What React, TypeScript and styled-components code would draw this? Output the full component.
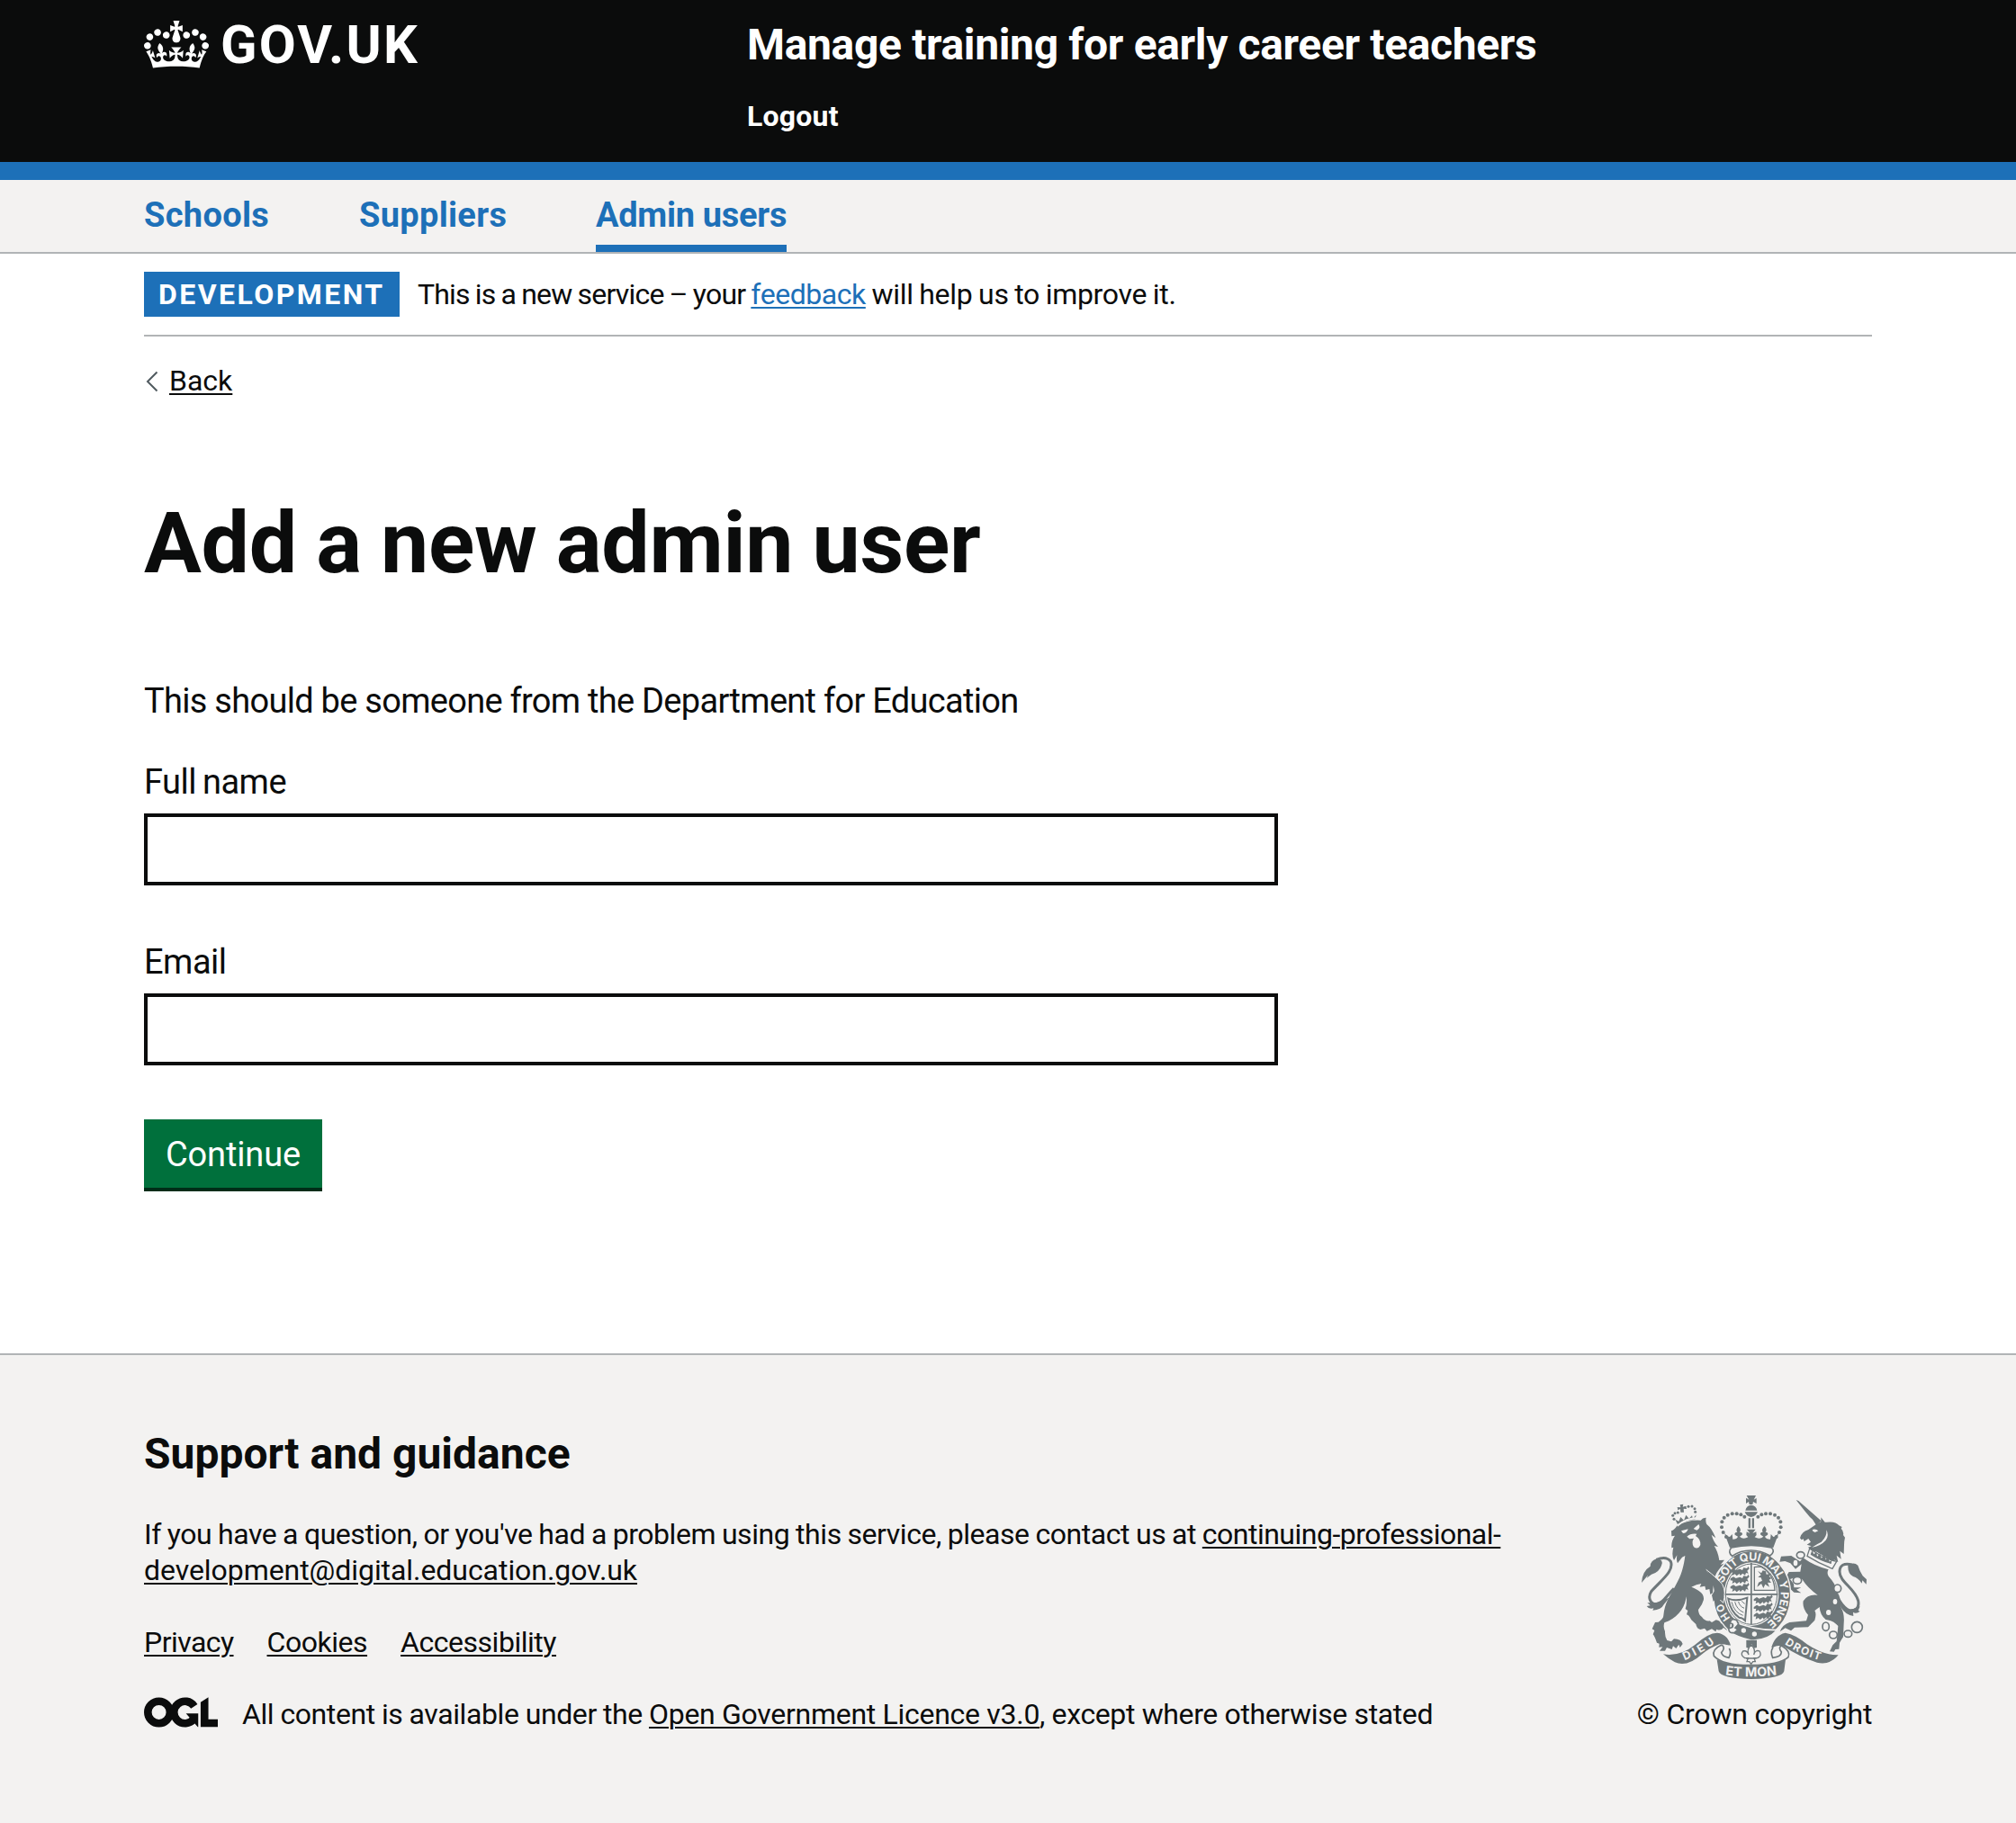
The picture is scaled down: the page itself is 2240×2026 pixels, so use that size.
import React from "react";
import styled, { createGlobalStyle } from "styled-components";

const ink = "#0b0c0c";
const blue = "#1d70b8";
const rule = "#b1b4b6";
const pale = "#f3f2f1";
const crestGrey = "#6e777a";

const GlobalStyle = createGlobalStyle`
  *, *::before, *::after { box-sizing: border-box; }
  body {
    margin: 0;
    background: #fff;
    color: ${ink};
    font-family: Roboto, "Liberation Sans", sans-serif;
    font-size: 32px;
    line-height: 40px;
  }
`;

const Page = styled.div`
  display: flex;
  flex-direction: column;
  min-height: 2026px;
`;

const Container = styled.div`
  width: 1920px;
  margin: 0 auto;
`;

/* One run of copy with its own tracking. */
const Run = styled.span<{ $track?: number; $word?: number }>`
  letter-spacing: ${(p) => p.$track ?? 0}px;
  word-spacing: ${(p) => p.$word ?? 0}px;
`;

const Link = styled.a<{ $track?: number; $word?: number; $tone?: string }>`
  color: ${(p) => p.$tone ?? ink};
  letter-spacing: ${(p) => p.$track ?? 0}px;
  word-spacing: ${(p) => p.$word ?? 0}px;
  text-decoration: underline;
  text-decoration-thickness: 2px;
  text-underline-offset: 3px;
`;

/* Header */
const Header = styled.header`
  height: 200px;
  background: ${ink};
  color: #fff;
  border-bottom: 20px solid ${blue};
`;

const HeaderGrid = styled(Container)`
  display: grid;
  grid-template-columns: 670px 1fr;
  padding-top: 20px;
`;

const Brand = styled.a`
  display: flex;
  align-items: flex-start;
  gap: 13px;
  color: #fff;
`;

const Crown = styled.svg`
  width: 72px;
  height: 53px;
  margin-top: 3px;
`;

const BrandName = styled.span`
  font-size: 59.5px;
  font-weight: 700;
  line-height: 60px;
  letter-spacing: 2.2px;
`;

const ServiceName = styled.a`
  display: block;
  font-size: 48px;
  font-weight: 700;
  line-height: 60px;
  letter-spacing: -0.35px;
`;

const Logout = styled.a`
  display: block;
  margin-top: 29px;
  font-weight: 700;
  letter-spacing: 0.2px;
`;

/* Primary navigation */
const NavBar = styled.nav`
  background: ${pale};
  border-bottom: 2px solid ${rule};
`;

const NavList = styled(Container)`
  display: flex;
  gap: 100px;
  height: 80px;
`;

const NavItem = styled.a<{ $width: number; $track: number; $active?: boolean }>`
  width: ${(p) => p.$width}px;
  height: 80px;
  padding-top: 14px;
  border-bottom: ${(p) => (p.$active ? `8px solid ${blue}` : "0")};
  color: ${blue};
  font-size: 38px;
  font-weight: 700;
  line-height: 50px;
  letter-spacing: ${(p) => p.$track}px;
  white-space: nowrap;
`;

/* Phase banner */
const PhaseBanner = styled(Container)`
  display: flex;
  align-items: flex-start;
  gap: 20px;
  height: 92px;
  padding-top: 20px;
  border-bottom: 2px solid ${rule};
`;

const Tag = styled.strong`
  width: 284px;
  height: 50px;
  padding: 5px 0 0 16px;
  background: ${blue};
  color: #fff;
  font-weight: 700;
  letter-spacing: 2.45px;
`;

const PhaseText = styled.p`
  margin: 5px 0 0;
  white-space: pre;
`;

/* Main */
const Main = styled(Container)`
  height: 1130px;
`;

const BackLink = styled.div`
  display: flex;
  align-items: center;
  gap: 12px;
  margin-top: 29px;
`;

const Chevron = styled.svg`
  width: 14px;
  height: 24px;
  margin: 2px 0 0 2px;
`;

const Title = styled.h1`
  margin: 111px 0 0;
  font-size: 95px;
  font-weight: 700;
  line-height: 100px;
  letter-spacing: -0.3px;
  word-spacing: -2px;
`;

const Intro = styled.p`
  margin: 100px 0 0;
  font-size: 38px;
  line-height: 50px;
`;

const Field = styled.div<{ $gap: number }>`
  display: flex;
  flex-direction: column;
  gap: 10px;
  width: 1260px;
  margin-top: ${(p) => p.$gap}px;
`;

const Label = styled.label`
  font-size: 38px;
  line-height: 50px;
`;

const Input = styled.input`
  width: 100%;
  height: 80px;
  border: 4px solid ${ink};
  border-radius: 0;
  background: #fff;
  font: inherit;
`;

const Button = styled.button`
  display: block;
  width: 198px;
  height: 80px;
  margin-top: 60px;
  padding: 14px 0 12px;
  border: 0;
  border-bottom: 4px solid #002d18;
  background: #00703c;
  color: #fff;
  font-family: inherit;
  font-size: 38px;
  line-height: 50px;
  letter-spacing: -0.15px;
`;

/* Footer */
const Footer = styled.footer`
  flex: 1;
  background: ${pale};
  border-top: 2px solid ${rule};
`;

const FooterGrid = styled(Container)`
  display: flex;
  align-items: flex-end;
  justify-content: space-between;
  padding-top: 80px;
`;

const FooterCopy = styled.div`
  width: 1540px;
`;

const FooterHeading = styled.h2`
  margin: 0;
  font-size: 48px;
  font-weight: 700;
  line-height: 60px;
`;

const Support = styled.p`
  margin: 39px 0 0;
`;

const FooterLinks = styled.div`
  display: flex;
  gap: 37px;
  margin-top: 40px;
`;

const Licence = styled.div`
  display: flex;
  align-items: flex-start;
  gap: 27px;
  margin-top: 40px;
  white-space: pre;
`;

const OglMark = styled.svg`
  width: 82px;
  height: 34px;
  margin-top: 1px;
`;

const Copyright = styled.div`
  display: flex;
  flex-direction: column;
  align-items: center;
  gap: 19px;
  width: 261px;
  white-space: nowrap;
`;

const Crest = styled.svg`
  display: block;
  width: 252px;
  height: 206px;
`;

const CrestText = styled.text<{ $size: number }>`
  fill: ${pale};
  font-family: Inter, Roboto, sans-serif;
  font-size: ${(p) => p.$size}px;
  font-weight: 700;
`;

const CrownIcon = () => (
  <Crown viewBox="0 0 132 97" fill="#fff" aria-hidden="true">
    <path
      fillRule="evenodd"
      d="M25 30.2c3.5 1.5 7.7-.2 9.1-3.7 1.5-3.6-.2-7.8-3.9-9.2-3.6-1.4-7.6.3-9.1 3.9-1.4 3.5.3 7.5 3.9 9zM9 39.5c3.6 1.5 7.8-.2 9.2-3.7 1.5-3.6-.2-7.8-3.9-9.1-3.6-1.5-7.6.2-9.1 3.8-1.4 3.5.3 7.5 3.8 9zM4.4 57.2c3.5 1.5 7.7-.2 9.1-3.8 1.5-3.6-.2-7.7-3.9-9.1-3.5-1.5-7.6.3-9.1 3.8-1.4 3.5.3 7.6 3.9 9.1zm38.3-21.4c3.5 1.5 7.7-.2 9.1-3.8 1.5-3.6-.2-7.7-3.9-9.1-3.6-1.5-7.6.3-9.1 3.8-1.3 3.6.4 7.7 3.9 9.1zm64.4-5.6c-3.6 1.5-7.8-.2-9.1-3.7-1.5-3.6.2-7.8 3.8-9.2 3.6-1.4 7.7.3 9.2 3.9 1.3 3.5-.4 7.5-3.9 9zm15.9 9.3c-3.6 1.5-7.7-.2-9.1-3.7-1.5-3.6.2-7.8 3.7-9.1 3.6-1.5 7.7.2 9.2 3.8 1.5 3.5-.3 7.5-3.8 9zm4.7 17.7c-3.6 1.5-7.8-.2-9.2-3.8-1.5-3.6.2-7.7 3.9-9.1 3.6-1.5 7.7.3 9.2 3.8 1.3 3.5-.4 7.6-3.9 9.1zM89.3 35.8c-3.6 1.5-7.8-.2-9.2-3.8-1.4-3.6.2-7.7 3.9-9.1 3.6-1.5 7.7.3 9.2 3.8 1.4 3.6-.3 7.7-3.9 9.1zM69.7 17.7l8.9 4.7V9.3l-8.9 2.8c-.2-.3-.5-.6-.9-.9L72.4 0H59.6l3.5 11.2c-.3.3-.6.5-.9.9l-8.8-2.8v13.1l8.8-4.7c.3.3.6.7.9.9l-5 15.4v.1c-.2.8-.4 1.6-.4 2.4 0 4.1 3.1 7.5 7 8.1h.2c.3 0 .7.1 1 .1.4 0 .7 0 1-.1h.2c4-.6 7.1-4.1 7.1-8.1 0-.8-.1-1.7-.4-2.4V34l-5.1-15.4c.4-.2.7-.6 1-.9zM66 92.8c16.9 0 32.8 1.1 47.1 3.2 4-16.9 8.9-26.7 14-33.5l-9.6-3.4c1 4.9 1.1 7.2 0 10.2-1.5-1.4-3-4.3-4.2-8.7L108.6 76c2.8-2 5-3.2 7.5-3.3-4.4 9.4-10 11.9-13.6 11.2-4.3-.8-6.3-4.6-5.6-7.9 1-4.7 5.7-5.9 8-.5 4.3-8.7-3-11.4-7.6-8.8 7.1-7.2 7.9-13.5 2.1-21.1-8 6.1-8.1 12.3-4.5 20.8-4.7-5.4-12.1-2.5-9.5 6.2 3.4-5.2 7.9-2 7.2 3.1-.6 4.3-6.4 7.8-13.5 7.2-10.3-.9-10.9-8-11.2-13.8 2.5-.5 7.1 1.8 11 7.3L80.2 60c-4.1 4.4-8 5.3-12.3 5.4 1.4-4.4 8-11.6 8-11.6H55.5s6.4 7.2 7.9 11.6c-4.2-.1-8-1-12.3-5.4l1.4 16.4c3.9-5.5 8.5-7.7 10.9-7.3-.3 5.8-.9 12.8-11.1 13.8-7.2.6-12.9-2.9-13.5-7.2-.7-5 3.8-8.3 7.1-3.1 2.7-8.7-4.6-11.6-9.4-6.2 3.7-8.5 3.6-14.7-4.6-20.8-5.8 7.6-5 13.9 2.2 21.1-4.7-2.6-11.9.1-7.7 8.8 2.3-5.5 7.1-4.2 8.1.5.7 3.3-1.3 7.1-5.7 7.9-3.5.7-9-1.8-13.5-11.2 2.5.1 4.7 1.3 7.5 3.3l-4.7-15.4c-1.2 4.4-2.7 7.2-4.3 8.7-1.1-3-.9-5.3 0-10.2l-9.5 3.4c5 6.9 9.9 16.7 14 33.5 14.8-2.1 30.8-3.2 47.7-3.2z"
    />
  </Crown>
);

/* The interlocking rings and bar of the licence mark. */
const OglIcon = () => (
  <OglMark viewBox="0 0 483.2 196" role="img" aria-label="Open Government Licence">
    <g fill="none" stroke={ink} strokeWidth="50.7">
      <circle cx="97.8" cy="97.8" r="72.4" />
      <path d="M329 58.5A72.4 72.4 0 1 0 326 142" />
    </g>
    <path fill={ink} d="M275 106h80v88h-3z" />
    <path fill={ink} d="M370.800 32.400L421.500 0v143h61.700v50.700H370.800z" />
  </OglMark>
);

/* Beads of the central crown's left arch; the right arch mirrors them. */
const beads: [number, number][] = [
  [384, 204], [374, 189], [369, 172], [370, 154], [377, 140], [389, 131], [404, 127], [419, 127], [433, 130], [445, 137],
];

const lionCrownBeads: [number, number][] = [
  [210, 145], [206, 133], [213, 125], [223, 123], [258, 103], [270, 102], [279, 110], [281, 121],
];

const RoyalCrest = () => (
  <Crest viewBox="102 60 756 618" role="img" aria-label="Royal coat of arms" fill={crestGrey}>
    <defs>
      <path id="garter" d="M370 395A98 112 0 0 1 468 283A98 112 0 0 1 566 395A98 112 0 0 1 468 507" />
      <path id="garterStart" d="M402 479A98 112 0 0 1 370 410" />
      <path id="scrollLeft" d="M244 616Q300 594 350 556" />
      <path id="scrollRight" d="M576 559Q630 598 706 618" />
      <path id="scrollMid" d="M378 664Q467 676 560 663" />
    </defs>

    {/* Lion: crown, head and mane, body, tail */}
    <g>
      <path d="M222 162L214 146L226 152L232 138L243 149L250 131L260 143L270 133L273 144L284 130L280 147Q248 148 222 162z" />
      {lionCrownBeads.map(([x, y]) => (
        <circle key={`${x}-${y}`} cx={x} cy={y} r="4.5" />
      ))}
      <path d="M230 97l11-2-2 9 11-3 2 10-10-1 1 12h-11l-1-11-8 4-2-10 11 1z" />
      <path d="M201 184Q210 183 221 166Q260 146 299 149Q306 139 317 140Q314 152 319 162Q336 175 349 208L335 197Q342 222 357 237L344 234Q357 254 361 282L378 281L365 297L381 292Q356 312 347 335L342 342L318 316C330 337 352 349 365 361C376 374 378 395 374 410L371 425L362 412L360 429L350 410L342 420Q336 403 344 388L331 396L328 378L316 381L313 368L296 371L301 360Q285 362 268 371C288 380 311 390 309 412Q306 429 291 447Q291 462 303 471Q313 486 329 484L336 489L350 481Q363 482 367 494L372 484L385 490Q393 501 386 515L375 507Q366 519 352 512L349 520L336 511L320 518L312 509L298 513Q286 511 283 495L268 481Q259 463 252 463L256 450L248 444Q254 425 251 403C247 440 222 475 178 490Q173 504 180 519Q179 536 187 549L201 553L210 544Q234 545 239 561L230 573L226 563L217 576L207 568L203 579L186 573L180 584L162 584L172 571L160 572L161 560L153 557Q145 535 140 529L145 516L137 511L147 489L158 488Q175 478 175 466C179 422 197 401 214 368C236 331 243 299 247 267L237 272L222 292Q217 284 220 265L210 282Q201 265 208 239L202 241Q200 218 213 200L202 202z" />
      <path fill={pale} d="M220 164Q250 139 285 138L291 146Q252 144 222 170zM234 184L257 178Q253 192 240 192zM275 177L292 162Q301 175 286 182zM253 203Q266 191 286 194L282 201Q300 212 298 231Q290 248 276 238Q267 222 276 209L262 211z" />
      <path d="M102 357Q104 318 131 302Q132 282 153 277Q177 280 168 300Q160 323 135 329L119 341L124 331z" />
      <path fill="none" stroke={crestGrey} strokeWidth="9" d="M151 280Q184 266 199 286C211 317 171 345 134 386C121 407 132 428 151 429C171 429 184 401 210 376" />
      <path d="M151 423L121 424L131 433L119 435Q127 447 142 442L139 449Q168 447 176 430L194 407z" />
    </g>

    {/* Unicorn: horn, head, collar, body, tail */}
    <g>
      <path d="M617 81L625 84L701 151L684 165L672 146L663 138L646 118z" />
      <path d="M684 162L700 153L700 139L713 155L719 155Q749 151 760 166L770 171L767 176Q777 186 774 198L780 206Q777 218 777 231L776 261L763 251L767 278L752 266L757 288L746 281L735 283Q709 268 686 254Q669 252 657 239L668 235L653 230L666 221L658 210L644 219L641 211L635 214L630 208Q634 187 658 180z" />
      <path fill={pale} d="M671 180Q682 176 691 184L680 189L673 185zM718 181Q721 203 701 221Q686 228 670 239Q698 235 716 215Q728 200 718 181z" />
      <path fill={pale} stroke={crestGrey} strokeWidth="4" d="M662 243Q706 275 752 286L738 310Q691 291 654 268z" />
      <path d="M665 263l5-14 6 13 9-7 2 15 10-12 4 17 11-11 3 16 11-9 2 16 8-6-2 13q-35-9-69-31z" />
      <path d="M640 274Q679 302 725 313Q718 324 726 337Q748 360 750 380Q770 410 767 440Q779 461 776 492L774 538Q767 548 762 557L760 578L748 579L743 587L729 586L739 565L752 552L754 534L757 501Q739 482 716 480Q697 465 695 438L679 450Q686 460 679 482L657 505L612 506L600 517L581 508L563 520Q571 497 595 489L651 484L657 464Q637 442 641 418Q655 394 689 398Q655 374 637 345L608 341L597 345L609 361L610 373L634 373L618 380L634 391L610 389L593 373L577 348L593 321L631 320L635 295L615 311L598 292L580 285L562 287L567 269L601 267L630 286z" />
      <g fill={pale} stroke={crestGrey} strokeWidth="5">
        <ellipse cx="632" cy="265" rx="13" ry="11" />
        <ellipse cx="621" cy="349" rx="14" ry="12" />
        <ellipse cx="755" cy="376" rx="12" ry="13" />
        <ellipse cx="716" cy="503" rx="11" ry="14" />
        <ellipse cx="741" cy="531" rx="13" ry="12" />
        <ellipse cx="790" cy="527" rx="13" ry="11" />
        <circle cx="820" cy="505" r="18" />
      </g>
      <g fill={pale}>
        <ellipse cx="615" cy="291" rx="7" ry="10" />
        <ellipse cx="747" cy="420" rx="7" ry="9" />
        <ellipse cx="725" cy="456" rx="8" ry="9" />
      </g>
      <path fill="none" stroke={crestGrey} strokeWidth="9" d="M804 297Q763 287 762 320C762 355 812 374 824 417C829 443 813 451 794 449Q778 443 757 410" />
      <path d="M790 300Q808 285 823 299Q829 318 839 334L852 346L851 362L838 349L836 359Q824 341 807 336Q789 327 790 300zM765 415Q780 447 800 447L830 436L824 450L830 452Q817 462 807 455L808 468Q783 466 766 439z" />
    </g>

    {/* Garter and quartered shield */}
    <ellipse cx="470" cy="398" rx="129" ry="148" stroke={pale} strokeWidth="4" />
    <ellipse cx="468" cy="395" rx="91" ry="106" fill={pale} />
    <ellipse cx="468" cy="395" rx="86" ry="101" fill="none" stroke={crestGrey} strokeWidth="3" />
    <path d="M465 290h5v206h-5zM378 393h178v5H378z" />
    {[316, 343, 370].map((y) => (
      <path key={y} d={`M398 ${y}l10-6 8 5 14-4 8 4 4-8 11 2 5-6 3 7-7 7 4 9-8-2-3 8-8-6-8 7-3-6-9 7-6-6-9 5 2-10-8-1z`} />
    ))}
    {[412, 438, 464].map((y) => (
      <path key={y} d={`M476 ${y}l10-7 8 5 14-5 8 4 4-8 11 2 5-6 3 7-7 7 4 9-8-2-3 8-8-6-8 7-3-6-9 7-6-6-9 5 2-10-8 1z`} />
    ))}
    <path fill="none" stroke={crestGrey} strokeWidth="4" d="M478 305V382H546Q544 329 499 303z" />
    <path d="M489 317l12 8 5-9 10 3 2 10 14-2-5 9 8 6-8 5 7 10-12-1 6 15-14-9-6 13-7-15-14 11 5-15 12-6-4-10-10-2 10-7z" />
    <path fill="none" stroke={crestGrey} strokeWidth="6" d="M391 410Q418 421 454 407L447 483Q438 473 427 473Q398 453 391 410z" />
    <path fill="none" stroke={crestGrey} strokeWidth="3" d="M402 421Q411 457 440 466M413 421Q419 446 442 456M425 420Q428 435 444 442M436 418Q440 424 446 427" />

    <CrestText $size={37}>
      <textPath href="#garter" startOffset="36" textLength="404" lengthAdjust="spacing">SOIT QUI MAL Y PENSE</textPath>
    </CrestText>
    <CrestText $size={34}>
      <textPath href="#garterStart" startOffset="6" textLength="56" lengthAdjust="spacing">HO</textPath>
    </CrestText>

    {/* Lion's foreleg laid over the garter */}
    <path d="M318 314Q355 344 369 363Q382 388 371 422L364 413L360 427L350 410L341 419L336 398L345 385L340 362z" />
    <path fill="none" stroke={pale} strokeWidth="3" d="M317 313Q355 342 371 362Q385 388 374 424L364 414" />

    {/* Strap and buckle */}
    <path stroke={pale} strokeWidth="5" d="M402 482Q464 514 554 515Q521 552 467 549Q420 539 397 521z" />
    <path fill={pale} stroke={crestGrey} strokeWidth="5" d="M419 482Q400 472 397 492Q411 493 405 505L392 510Q393 528 412 523L423 513L414 507L425 495z" />
    <g fill={pale}>
      <circle cx="442" cy="516" r="8" />
      <circle cx="478" cy="528" r="8" />
    </g>

    {/* Central crown */}
    <path d="M452 66h31l-7 14 9-5v18l-11-6-2 9h-11l-2-9-9 6V74l10 6z" />
    <path d="M448 116Q451 99 467 98Q484 99 487 116zM446 121H489Q483 136 467 138Q451 136 446 121z" />
    <path d="M458 142h7v33h-7zM470 142h7v33h-7z" />
    {beads.map(([x, y]) => (
      <g key={`${x}-${y}`}>
        <circle cx={x} cy={y} r="6" />
        <circle cx={935 - x} cy={y} r="6" />
      </g>
    ))}
    <path d="M378 191Q390 204 396 204L404 195L406 212Q420 212 423 203L413 197Q410 189 421 188Q414 180 425 168Q436 180 429 188Q441 189 437 197L429 203Q440 214 457 205L451 198L452 187L463 192L453 179H482L472 192L484 187L485 198L479 205Q496 214 508 203L499 197Q495 189 506 188Q500 180 512 168Q522 180 515 188Q526 189 522 197L513 203Q517 212 531 212L533 195L541 204Q548 203 559 191L541 240Q467 226 396 240z" />
    <path fill={pale} stroke={crestGrey} strokeWidth="5" d="M401 240Q467 224 535 240Q549 253 530 267Q500 249 467 249Q431 249 404 268Q388 255 401 240z" />

    {/* Motto scroll */}
    <path d="M174 595Q231 604 280 564Q324 524 354 524Q393 528 402 578Q391 559 361 562Q329 574 302 596Q254 639 213 622Q192 611 174 595z" />
    <path d="M758 598Q710 600 653 562Q616 530 581 524Q544 532 533 579Q548 562 576 569Q629 604 687 623Q729 633 758 598z" />
    <path fill={pale} stroke={crestGrey} strokeWidth="5" d="M369 564Q336 579 343 601Q372 633 467 632Q562 632 591 605Q600 586 569 567Q556 572 568 588Q568 604 539 607Q530 586 540 573M369 564Q383 573 368 590Q371 604 393 607Q402 590 394 576" />
    <path d="M353 613Q389 633 467 634Q546 634 582 613L577 652Q570 677 467 678Q367 677 359 652z" />
    <CrestText $size={37}>
      <textPath href="#scrollLeft" startOffset="1" textLength="116" lengthAdjust="spacing">DIEU</textPath>
    </CrestText>
    <CrestText $size={36}>
      <textPath href="#scrollRight" startOffset="3" textLength="130" lengthAdjust="spacing">DROIT</textPath>
    </CrestText>
    <CrestText $size={43}>
      <textPath href="#scrollMid" startOffset="3" textLength="173" lengthAdjust="spacing">ET MON</textPath>
    </CrestText>

    {/* Stem and fleur-de-lis */}
    <path d="M451 548h35v25l-9 2-9-14-9 14-8-2z" />
    <path fill={pale} stroke={crestGrey} strokeWidth="4" d="M467 564Q484 579 476 597Q481 579 495 585Q505 600 488 608L477 608L481 620H473L467 628L461 620H453L457 608L446 608Q429 598 440 585Q454 581 459 597Q451 580 467 564zM450 609H485" />
  </Crest>
);

export default function App() {
  return (
    <Page>
      <GlobalStyle />
      <Header>
        <HeaderGrid>
          <Brand>
            <CrownIcon />
            <BrandName>GOV.UK</BrandName>
          </Brand>
          <div>
            <ServiceName>Manage training for early career teachers</ServiceName>
            <Logout>Logout</Logout>
          </div>
        </HeaderGrid>
      </Header>

      <NavBar>
        <NavList>
          <NavItem $width={139} $track={0.3}>Schools</NavItem>
          <NavItem $width={163} $track={0.3}>Suppliers</NavItem>
          <NavItem $width={212} $track={-0.3} $active>Admin users</NavItem>
        </NavList>
      </NavBar>

      <PhaseBanner>
        <Tag>DEVELOPMENT</Tag>
        <PhaseText>
          <Run $track={-0.8} $word={-1.1}>This is a new service – your </Run>
          <Link $tone={blue} $track={-0.45}>feedback</Link>
          <Run $track={-0.3} $word={-1}> will help us to improve it.</Run>
        </PhaseText>
      </PhaseBanner>

      <Main as="main">
        <BackLink>
          <Chevron viewBox="0 0 14 24" fill="none" stroke="#505a5f" strokeWidth="2">
            <path d="M12.500 1.500L2 12L12.500 22.500" />
          </Chevron>
          <Link>Back</Link>
        </BackLink>
        <Title>Add a new admin user</Title>
        <Intro>
          <Run $track={-0.7} $word={-0.1}>This should be someone from the Department for Education</Run>
        </Intro>
        <Field $gap={40}>
          <Label htmlFor="name"><Run $track={-0.5} $word={-2}>Full name</Run></Label>
          <Input id="name" />
        </Field>
        <Field $gap={60}>
          <Label htmlFor="email"><Run $track={-0.5}>Email</Run></Label>
          <Input id="email" />
        </Field>
        <Button>Continue</Button>
      </Main>

      <Footer>
        <FooterGrid>
          <FooterCopy>
            <FooterHeading>Support and guidance</FooterHeading>
            <Support>
              <Run $track={-0.44} $word={-0.7}>
                If you have a question, or you've had a problem using this service, please contact us at{" "}
              </Run>
              <Link $track={-0.51}>continuing-professional-</Link>
              <br />
              <Link $track={-0.06}>development@digital.education.gov.uk</Link>
            </Support>
            <FooterLinks>
              <Link $track={-0.55}>Privacy</Link>
              <Link $track={-0.47}>Cookies</Link>
              <Link $track={-0.47}>Accessibility</Link>
            </FooterLinks>
            <Licence>
              <OglIcon />
              <span>
                <Run $track={-0.4} $word={-0.4}>All content is available under the </Run>
                <Link $track={-0.29}>Open Government Licence v3.0</Link>
                <Run $track={-0.37}>, except where otherwise stated</Run>
              </span>
            </Licence>
          </FooterCopy>
          <Copyright>
            <RoyalCrest />
            <Run $track={-0.2}>© Crown copyright</Run>
          </Copyright>
        </FooterGrid>
      </Footer>
    </Page>
  );
}
